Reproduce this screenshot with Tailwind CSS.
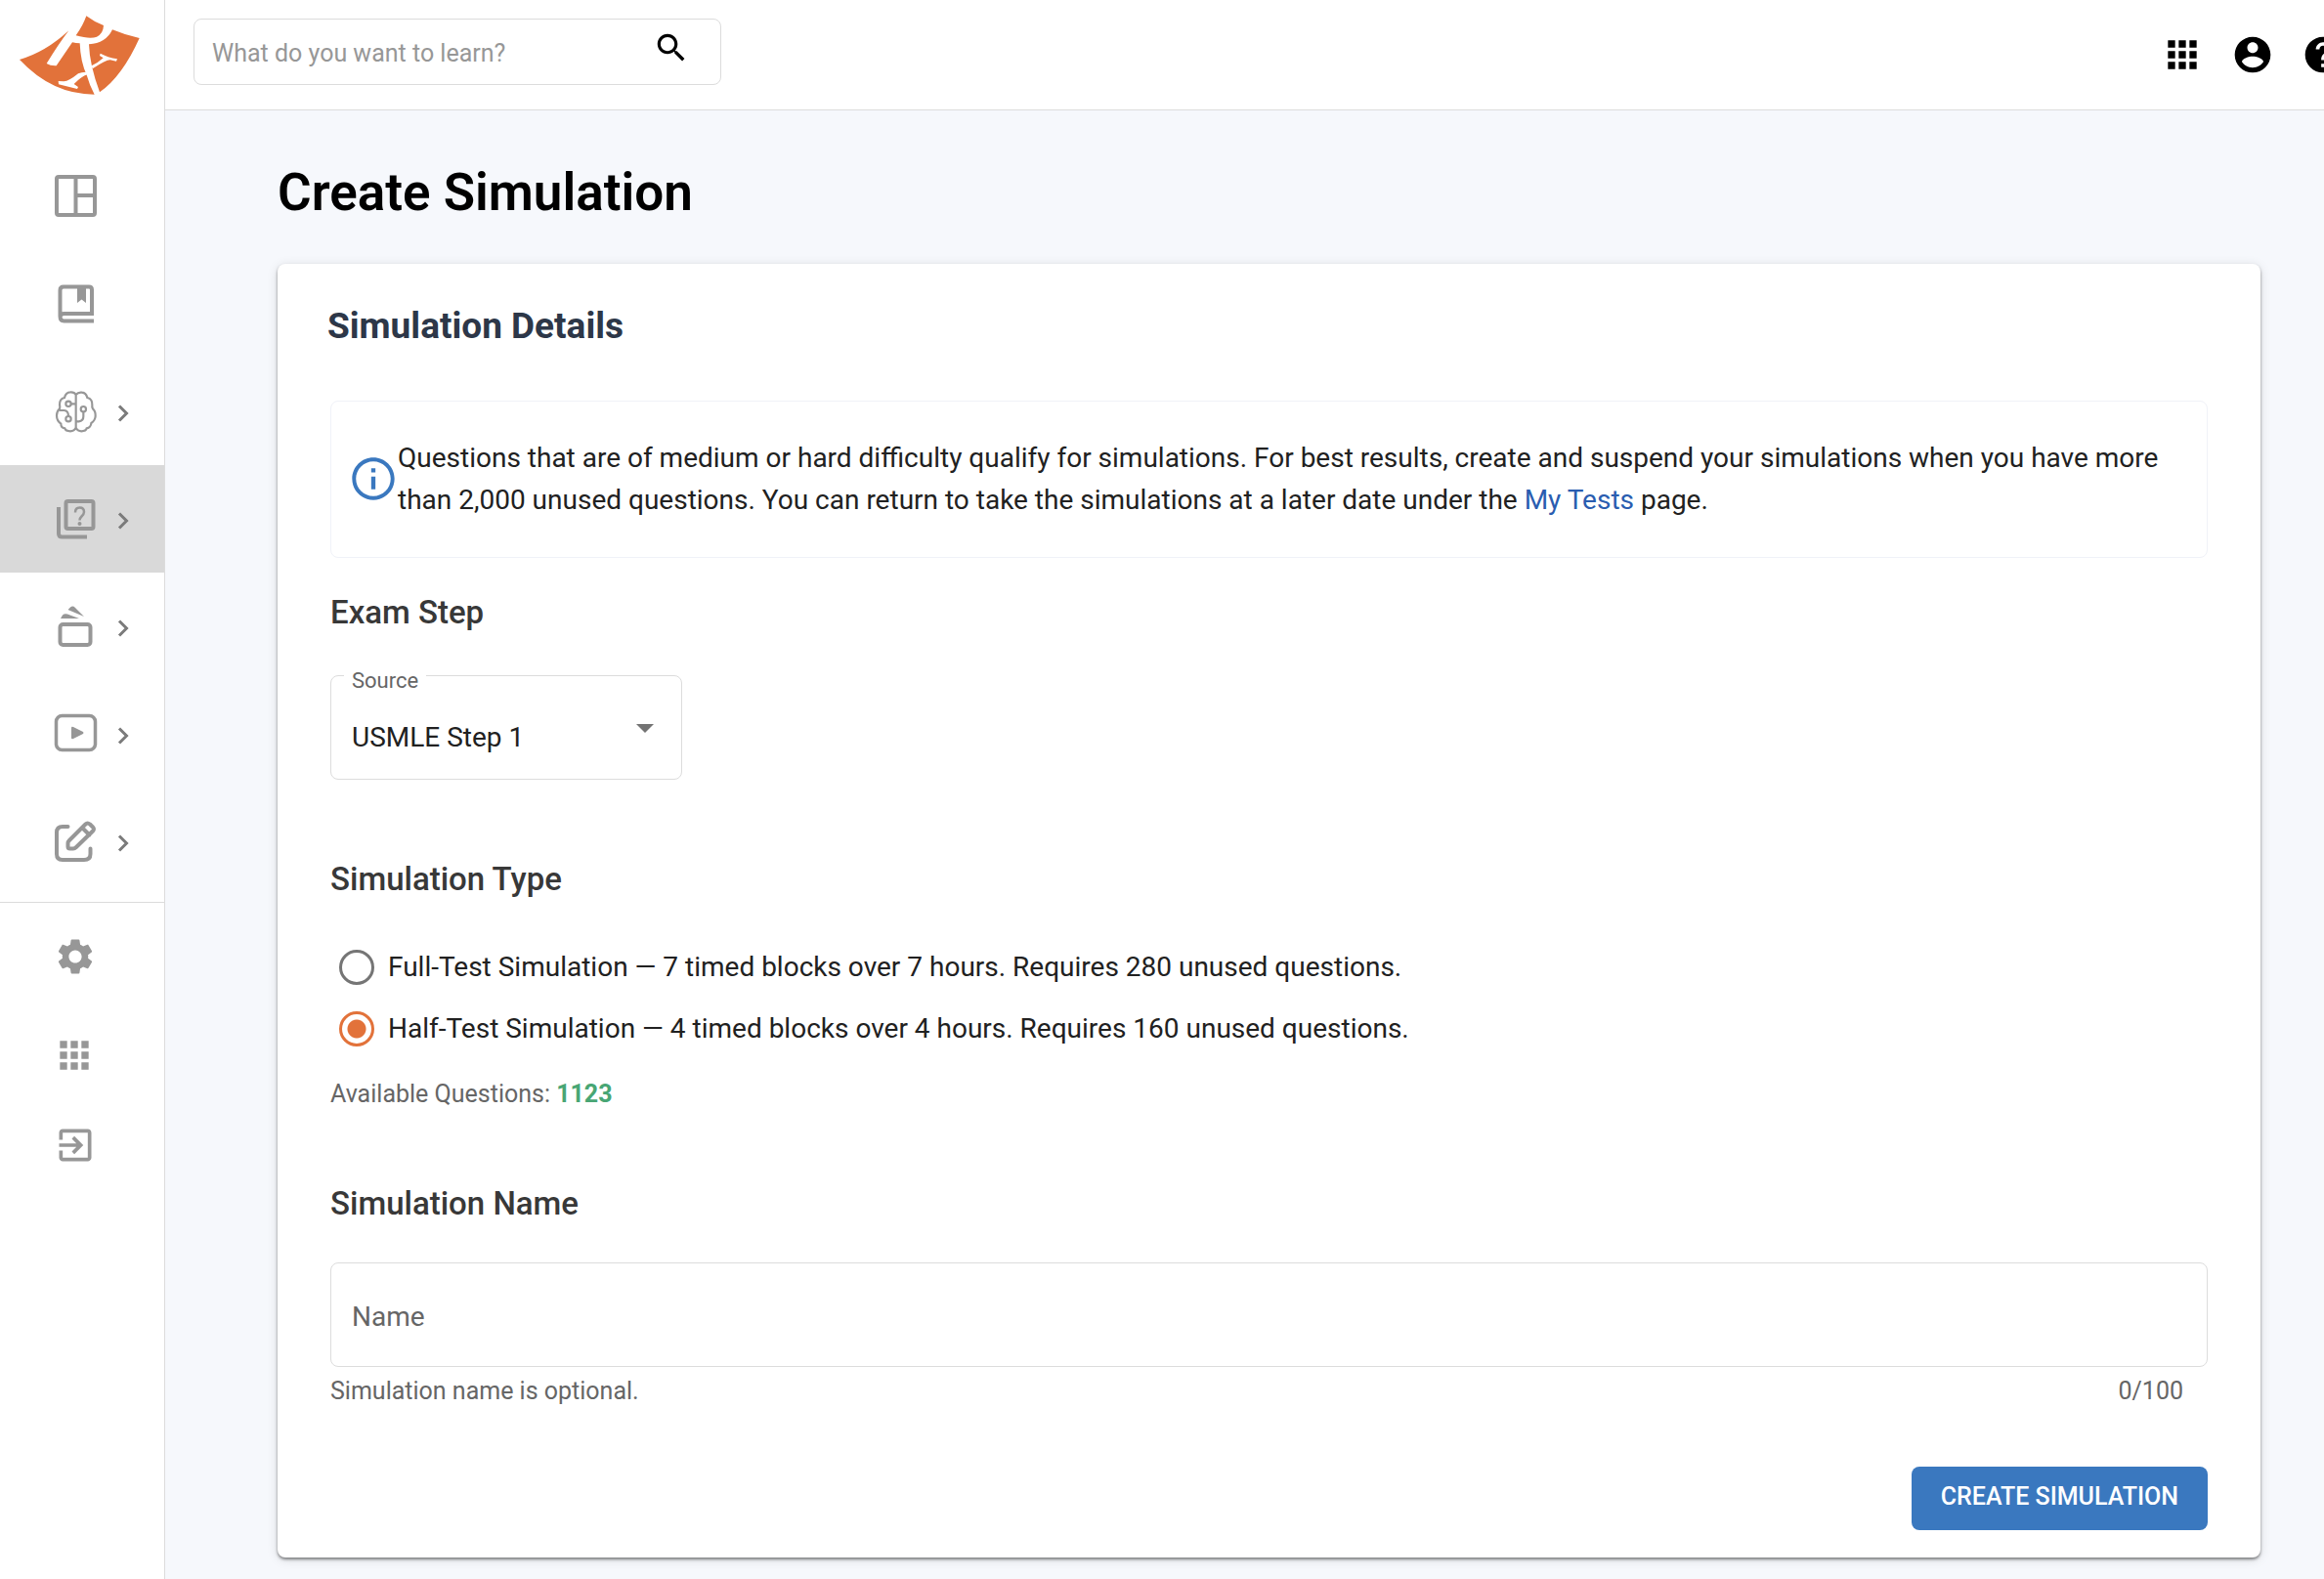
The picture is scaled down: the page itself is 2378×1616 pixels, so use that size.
<!DOCTYPE html>
<html lang="en">
<head>
<meta charset="utf-8">
<title>Create Simulation</title>
<script src="https://cdn.jsdelivr.net/npm/@tailwindcss/browser@4"></script>
</head>
<body class="bg-[#f6f8fc] font-['Roboto',sans-serif] text-[#212121] overflow-x-hidden">
<div class="flex min-h-screen">

  <aside class="w-[169px] shrink-0 border-r border-[#dcdcdc] bg-white">
    <a href="#" aria-label="Home" class="block h-[146px]">
      <svg class="h-[130px] w-[168px]" viewBox="0 0 504 390">
        <g fill="#e2723a">
          <path d="M265 49Q290 68 318 78Q317 103 297 113Q277 121 233 109Q255 78 265 49Z"/>
          <path d="M60 183Q140 160 211 94Q180 135 143 195Q155 203 173 202L222 130Q233 133 245 133Q247 190 266 230Q275 262 290 290Q160 290 60 183Z"/>
          <path d="M345 91Q385 108 428 117Q375 235 306 283Q275 200 273 136Q325 133 345 91Z"/>
        </g>
        <g fill="#fff">
          <path d="M179 249L196 250Q212 249 240 226Q250 221 263 221L268 229Q250 235 227 258L240 267L237 273L180 259Z"/>
          <path d="M281 202Q302 192 317 178L306 171L308 164Q330 176 360 181L357 188L338 184Q325 184 284 211Z"/>
        </g>
      </svg>
    </a>
    <nav class="text-[#979797]">
      <a href="#" aria-label="Dashboard" class="flex h-[110px] items-center pl-[52px]">
        <svg class="size-[52px]" viewBox="0 0 52 52" fill="none" stroke="currentColor" stroke-width="4"><rect x="6" y="6" width="39" height="39" rx="2"/><path d="M25.500 6V45M25.500 25H45"/></svg>
      </a>
      <a href="#" aria-label="Library" class="flex h-[110px] items-center pl-[52px]">
        <svg class="size-[52px]" viewBox="0 0 52 52"><path d="M43.500 36H13" stroke="currentColor" stroke-width="4"/><path d="M44 43.500H13.500Q9.500 43.500 9.500 38.500V12Q9.500 8.500 13 8.500H39Q42 8.500 42 11.500V36H13.500Q9.500 36 9.500 39.500" fill="none" stroke="currentColor" stroke-width="4"/><path d="M27 8H36V25L31.500 21.500L27 25Z" fill="currentColor"/></svg>
      </a>
      <a href="#" aria-label="Brain training" class="flex h-[110px] items-center gap-4 pl-[52px]">
        <svg class="size-[52px]" viewBox="0 0 156 156" fill="none" stroke="currentColor" stroke-width="6.500"><path d="M77 27Q72 18 60 19Q46 19 42 36Q26 40 27 58Q29 64 27 70Q18 78 18 91Q18 107 31 116Q31 128 43 130Q45 139 60 139Q72 139 77 128V27Q84 18 96 20Q108 21 112 36Q128 40 127 58Q126 64 129 70Q138 78 137 93Q136 106 124 114Q123 128 110 130Q108 139 94 139Q82 139 77 128M27 75H41Q54 76 54 93M77 55H63M77 109H86Q100 108 100 94V80"/><circle cx="54" cy="55" r="8"/><circle cx="54" cy="101" r="8"/><circle cx="100" cy="71" r="8"/></svg>
        <svg class="mt-1 h-5 w-3" viewBox="0 0 12 20" fill="none" stroke="#7b7b7b" stroke-width="3"><path d="M2 2.500L9.500 10L2 17.500"/></svg>
      </a>
      <a href="#" aria-label="Question bank" aria-current="page" class="flex h-[110px] items-center gap-4 bg-[#d9d9d9] pl-[52px]">
        <svg class="size-[52px]" viewBox="0 0 52 52" fill="none" stroke="currentColor" stroke-width="4"><rect x="15.500" y="8" width="28" height="28" rx="2"/><path d="M8 14V41Q8 44.500 11.500 44.500H37"/><path d="M25 19.500Q25 14.500 29.500 14.500Q34 14.500 34 19Q34 21 31.500 23.500Q29.500 25.500 29.500 27.500" stroke-width="2.500"/><circle cx="29.500" cy="31" r="2" fill="currentColor" stroke="none"/></svg>
        <svg class="mt-1 h-5 w-3" viewBox="0 0 12 20" fill="none" stroke="#7b7b7b" stroke-width="3"><path d="M2 2.500L9.500 10L2 17.500"/></svg>
      </a>
      <a href="#" aria-label="Flash cards" class="flex h-[110px] items-center gap-4 pl-[52px]">
        <svg class="size-[52px]" viewBox="0 0 52 52"><rect x="9.500" y="24" width="31" height="21" rx="3" fill="none" stroke="currentColor" stroke-width="4"/><path d="M10 18L12 14.500Q14 12.500 17 13.500L29 18ZM17.500 9L20 6.500Q22.500 4.500 25 7L34 16Z" fill="currentColor"/></svg>
        <svg class="mt-1 h-5 w-3" viewBox="0 0 12 20" fill="none" stroke="#7b7b7b" stroke-width="3"><path d="M2 2.500L9.500 10L2 17.500"/></svg>
      </a>
      <a href="#" aria-label="Videos" class="flex h-[110px] items-center gap-4 pl-[52px]">
        <svg class="size-[52px]" viewBox="0 0 52 52"><rect x="5.500" y="7.500" width="40" height="35" rx="6" fill="none" stroke="currentColor" stroke-width="3.500"/><path d="M21 20Q21 18 23 19L33 24Q34 25 33 26L23 31Q21 32 21 30Z" fill="currentColor"/></svg>
        <svg class="mt-1 h-5 w-3" viewBox="0 0 12 20" fill="none" stroke="#7b7b7b" stroke-width="3"><path d="M2 2.500L9.500 10L2 17.500"/></svg>
      </a>
      <a href="#" aria-label="Create" class="flex h-[118px] items-center gap-4 border-b border-[#dcdcdc] pb-2 pl-[52px]">
        <svg class="size-[52px]" viewBox="0 0 52 52" fill="none" stroke="currentColor" stroke-width="4" stroke-linecap="round" stroke-linejoin="round"><path d="M17.500 11H12Q6 11 6 17V39Q6 45 12 45H34Q40.500 45 40.500 39V33.500M17.500 28Q17.500 26.500 19 25L35.500 8.500Q37.500 6.500 40 8.500L43 11.500Q45 13.500 43 15.500L26 32Q24.500 33.500 23 33.500H19.500Q17.500 33.500 17.500 31.500ZM32.500 12.500L39.500 19.500"/></svg>
        <svg class="mt-1 h-5 w-3" viewBox="0 0 12 20" fill="none" stroke="#7b7b7b" stroke-width="3"><path d="M2 2.500L9.500 10L2 17.500"/></svg>
      </a>
      <a href="#" aria-label="Settings" class="flex h-[110px] items-center pl-[55px]">
        <svg class="size-11" viewBox="0 0 24 24" fill="currentColor"><path d="M19.140 12.940c.04-.3.06-.61.06-.94 0-.32-.02-.64-.07-.94l2.030-1.580c.18-.14.23-.41.12-.61l-1.920-3.320c-.12-.22-.37-.29-.59-.22l-2.390.96c-.5-.38-1.030-.7-1.620-.94l-.36-2.540c-.04-.24-.24-.41-.48-.41h-3.840c-.24 0-.43.17-.47.41l-.36 2.540c-.59.24-1.130.57-1.620.94l-2.390-.96c-.22-.08-.47 0-.59.22L2.740 8.870c-.12.21-.08.47.12.61l2.030 1.580c-.05.3-.09.63-.09.94s.02.64.07.94l-2.030 1.580c-.18.14-.23.41-.12.61l1.920 3.320c.12.22.37.29.59.22l2.390-.96c.5.38 1.030.7 1.620.94l.36 2.540c.05.24.24.41.48.41h3.840c.24 0 .44-.17.47-.41l.36-2.540c.59-.24 1.130-.56 1.620-.94l2.390.96c.22.08.47 0 .59-.22l1.920-3.320c.12-.22.07-.47-.12-.61l-2.010-1.580zM12 15.600c-1.980 0-3.600-1.620-3.600-3.600s1.620-3.600 3.600-3.600 3.600 1.620 3.600 3.600-1.620 3.600-3.600 3.600z"/></svg>
      </a>
      <a href="#" aria-label="Apps" class="flex h-[92px] items-center pl-[54px]">
        <svg class="size-11" viewBox="0 0 24 24" fill="currentColor"><path d="M4 8h4V4H4v4zm6 12h4v-4h-4v4zm-6 0h4v-4H4v4zm0-6h4v-4H4v4zm6 0h4v-4h-4v4zm6-10v4h4V4h-4zm-6 4h4V4h-4v4zm6 6h4v-4h-4v4zm0 6h4v-4h-4v4z"/></svg>
      </a>
      <a href="#" aria-label="Log out" class="flex h-[92px] items-center pl-[55px]">
        <svg class="size-11" viewBox="0 0 24 24" fill="currentColor"><path d="M10.090 15.590L11.500 17l5-5-5-5-1.410 1.410L12.670 11H3v2h9.670l-2.580 2.590zM19 3H5c-1.110 0-2 .9-2 2v4h2V5h14v14H5v-4H3v4c0 1.100.89 2 2 2h14c1.100 0 2-.9 2-2V5c0-1.100-.9-2-2-2z"/></svg>
      </a>
    </nav>
  </aside>

  <div class="min-w-0 flex-1">
    <header class="flex h-[113px] items-start justify-between overflow-hidden border-b border-[#dcdcdc] bg-white pl-[29px] pt-[19px]">
      <form class="flex h-[68px] w-[540px] items-center rounded-lg border border-[#dcdcdc] pl-[18px] pr-[31px]">
        <input type="text" aria-label="Search" placeholder="What do you want to learn?" class="min-w-0 flex-1 pt-1 text-[25px] outline-none placeholder:text-[#979797]">
        <button type="button" aria-label="Search" class="mb-2 text-black"><svg class="size-[38px]" viewBox="0 0 24 24" fill="currentColor"><path d="M15.500 14h-.79l-.28-.27C15.410 12.590 16 11.110 16 9.500 16 5.910 13.090 3 9.500 3S3 5.910 3 9.500 5.910 16 9.500 16c1.610 0 3.090-.59 4.230-1.570l.27.28v.79l5 4.990L20.490 19l-4.990-5zm-6 0C7.010 14 5 11.990 5 9.500S7.010 5 9.500 5 14 7.010 14 9.500 11.990 14 9.500 14z"/></svg></button>
      </form>
      <div class="-mr-[21px] flex gap-7 pt-[15px] text-black">
        <button type="button" aria-label="Apps"><svg class="size-11" viewBox="0 0 24 24" fill="currentColor"><path d="M4 8h4V4H4v4zm6 12h4v-4h-4v4zm-6 0h4v-4H4v4zm0-6h4v-4H4v4zm6 0h4v-4h-4v4zm6-10v4h4V4h-4zm-6 4h4V4h-4v4zm6 6h4v-4h-4v4zm0 6h4v-4h-4v4z"/></svg></button>
        <button type="button" aria-label="Account"><svg class="size-11" viewBox="0 0 24 24" fill="currentColor"><path d="M12 2C6.480 2 2 6.480 2 12s4.480 10 10 10 10-4.480 10-10S17.520 2 12 2zm0 3c1.660 0 3 1.340 3 3s-1.340 3-3 3-3-1.340-3-3 1.340-3 3-3zm0 14.200c-2.500 0-4.710-1.280-6-3.220.03-1.990 4-3.080 6-3.080 1.990 0 5.970 1.090 6 3.080-1.290 1.940-3.500 3.220-6 3.220z"/></svg></button>
        <button type="button" aria-label="Help"><svg class="size-11" viewBox="0 0 24 24" fill="currentColor"><path d="M12 2C6.480 2 2 6.480 2 12s4.480 10 10 10 10-4.480 10-10S17.520 2 12 2zm1 17h-2v-2h2v2zm2.070-7.750l-.9.920C13.450 12.900 13 13.500 13 15h-2v-.5c0-1.100.45-2.100 1.170-2.830l1.240-1.260c.37-.36.59-.86.59-1.410 0-1.100-.9-2-2-2s-2 .9-2 2H8c0-2.210 1.790-4 4-4s4 1.790 4 4c0 .88-.36 1.680-.93 2.250z"/></svg></button>
      </div>
    </header>

    <main class="pb-[22px] pl-[115px] pr-[65px] pt-[52px]">
      <h1 class="text-[53px] leading-16 font-semibold text-black">Create Simulation</h1>

      <section class="mt-[41px] rounded-lg bg-white px-[54px] pt-[42px] pb-7 shadow-[0_2px_3px_rgba(0,0,0,0.45),0_2px_12px_rgba(0,0,0,0.12)]">
        <h2 class="-ml-[3px] text-[37px] leading-11 font-bold text-[#2d3748]">Simulation Details</h2>

        <div class="mt-[54px] flex items-center rounded-lg border border-[#f0f2f8] pt-9 pr-4 pb-[37px] pl-[18px]">
          <svg class="size-[52px] -mx-px shrink-0 text-[#3a78bf]" viewBox="0 0 24 24" fill="currentColor"><path d="M11 7h2v2h-2zm0 4h2v6h-2zm1-9C6.480 2 2 6.480 2 12s4.480 10 10 10 10-4.480 10-10S17.520 2 12 2zm0 18.200c-4.500 0-8.200-3.700-8.200-8.200S7.500 3.800 12 3.800s8.200 3.700 8.200 8.200-3.700 8.200-8.200 8.200z"/></svg>
          <p class="text-[28px] leading-[43px]">Questions that are of medium or hard difficulty qualify for simulations. For best results, create and suspend your simulations when you have more than 2,000 unused questions. You can return to take the simulations at a later date under the <a href="#" class="text-[#2a5db0]">My Tests</a> page.</p>
        </div>

        <form>
          <h3 class="mt-9 text-[33px] leading-10 font-medium text-[#383838]">Exam Step</h3>
          <div class="relative mt-11 w-[360px]">
            <label for="source" class="absolute -top-2 left-[14px] bg-white px-2 text-[22px] leading-7 text-[#666]">Source</label>
            <select id="source" class="block h-[107px] w-full appearance-none rounded-lg border border-[#dcdcdc] bg-white pt-5 pl-[21px] text-[28px] outline-none"><option>USMLE Step 1</option></select>
            <svg class="pointer-events-none absolute top-[50px] right-7 h-[10px] w-[20px]" viewBox="0 0 20 10"><path d="M1 0H19L10 9Z" fill="#737373"/></svg>
          </div>

          <h3 class="mt-[82px] text-[33px] leading-10 font-medium text-[#383838]">Simulation Type</h3>
          <div class="mt-12 flex flex-col gap-5 pl-[9px] text-[28px] leading-[43px]">
            <label class="flex items-center gap-[14px]"><input type="radio" name="type" class="size-9 appearance-none rounded-full border-3 border-[#757575] checked:border-[#e2723a] checked:bg-[radial-gradient(circle,#e2723a_9px,transparent_10px)]">Full-Test Simulation — 7 timed blocks over 7 hours. Requires 280 unused questions.</label>
            <label class="flex items-center gap-[14px]"><input type="radio" name="type" checked class="size-9 appearance-none rounded-full border-3 border-[#757575] checked:border-[#e2723a] checked:bg-[radial-gradient(circle,#e2723a_9px,transparent_10px)]">Half-Test Simulation — 4 timed blocks over 4 hours. Requires 160 unused questions.</label>
          </div>
          <p class="mt-7 text-[25px] leading-9 text-[#666]">Available Questions: <strong class="font-bold text-[#48a674]">1123</strong></p>

          <h3 class="mt-[74px] text-[33px] leading-10 font-medium text-[#383838]">Simulation Name</h3>
          <input type="text" aria-label="Simulation name" placeholder="Name" maxlength="100" class="mt-10 block h-[107px] w-full rounded-lg border border-[#dcdcdc] px-[21px] pt-1 text-[28px] outline-none placeholder:text-[#666]">
          <div class="mt-[7px] flex justify-between pr-[25px] text-[25px] leading-9 text-[#666]"><span>Simulation name is optional.</span><span>0/100</span></div>
          <div class="mt-[59px] flex justify-end">
            <button type="button" class="h-[65px] rounded-lg bg-[#3a78bf] px-[30px] pb-1 text-[25px] font-medium text-white">CREATE SIMULATION</button>
          </div>
        </form>
      </section>
    </main>
  </div>
</div>
</body>
</html>
